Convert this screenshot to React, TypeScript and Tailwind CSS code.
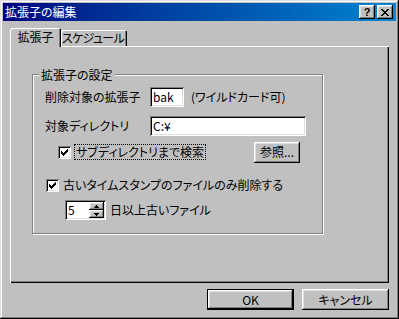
const raised =
  'shadow-[inset_-1px_-1px_#000,inset_1px_1px_#fff,inset_-2px_-2px_#808080,inset_2px_2px_#dfdfdf]'
const sunken =
  'shadow-[inset_1px_1px_#808080,inset_-1px_-1px_#fff,inset_2px_2px_#000,inset_-2px_-2px_#dfdfdf]'

function Check() {
  return (
    <div className={`grid h-[13px] w-[13px] flex-none place-items-center bg-white ${sunken}`}>
      <svg width="7" height="7" viewBox="0 0 7 7" shapeRendering="crispEdges">
        <path d="M6 0h1v1h-1zM5 1h2v1h-2zM0 2h1v1h-1zM4 2h3v1h-3zM0 3h2v1h-2zM3 3h3v1h-3zM0 4h5v1h-5zM1 5h3v1h-3zM2 6h1v1h-1z" fill="#000" />
      </svg>
    </div>
  )
}

function Arrow({ up }: { up?: boolean }) {
  return (
    <div className={`grid h-[8px] w-[15px] place-items-center bg-[#c0c0c0] ${raised}`}>
      <svg width="5" height="3" viewBox="0 0 5 3" shapeRendering="crispEdges">
        {up ? (
          <path d="M2 0h1v1h-1zM1 1h3v1h-3zM0 2h5v1h-5z" fill="#000" />
        ) : (
          <path d="M0 0h5v1h-5zM1 1h3v1h-3zM2 2h1v1h-1z" fill="#000" />
        )}
      </svg>
    </div>
  )
}

export default function App() {
  return (
    <div className="flex h-[319px] w-[399px] flex-col bg-[#c0c0c0] p-[3px] text-[12px] leading-[14px] text-black [font-family:'Noto_Sans_CJK_JP','Liberation_Sans',sans-serif] [font-feature-settings:'palt'] shadow-[inset_-1px_-1px_#000,inset_1px_1px_#dfdfdf,inset_-2px_-2px_#808080,inset_2px_2px_#fff]">
      {/* title bar */}
      <div className="flex h-[18px] flex-none items-center bg-linear-to-r from-[#000080] to-[#1084d0] pl-[2px] pr-[3px] text-white">
        <div className="flex-1">拡張子の編集</div>
        <div className="flex gap-[2px]">
          <div className={`grid h-[14px] w-[16px] place-items-center bg-[#c0c0c0] text-[11px] font-bold leading-none text-black [font-family:'Liberation_Sans',sans-serif] ${raised}`}>
            ?
          </div>
          <div className={`grid h-[14px] w-[16px] place-items-center bg-[#c0c0c0] ${raised}`}>
            <svg width="8" height="7" viewBox="0 0 8 7" shapeRendering="crispEdges">
              <path d="M0 0h2v1h-2zM6 0h2v1h-2zM1 1h2v1h-2zM5 1h2v1h-2zM2 2h4v1h-4zM3 3h2v1h-2zM2 4h4v1h-4zM1 5h2v1h-2zM5 5h2v1h-2zM0 6h2v1h-2zM6 6h2v1h-2z" fill="#000" />
            </svg>
          </div>
        </div>
      </div>

      <div className="flex flex-1 flex-col px-[7px] pt-[7px]">
        {/* tabs */}
        <div className="flex h-[18px] items-end">
          <div className="relative z-10 mb-[-1px] flex h-[19px] w-[51px] items-center justify-center whitespace-nowrap rounded-t-[2px] bg-[#c0c0c0] pb-[1px] shadow-[inset_1px_1px_#fff,inset_-1px_0_#000,inset_-2px_0_#808080]">
            拡張子
          </div>
          <div className="flex h-[16px] w-[66px] items-center justify-center whitespace-nowrap rounded-t-[2px] bg-[#c0c0c0] pr-[2px] tracking-[-0.6px] shadow-[inset_1px_1px_#fff,inset_-1px_0_#000,inset_-2px_0_#808080]">
            スケジュール
          </div>
        </div>

        {/* panel */}
        <div className="h-[237px] bg-[#c0c0c0] pl-[22px] pt-[28px] shadow-[inset_1px_1px_#fff,inset_-1px_-1px_#000,inset_-2px_-2px_#808080]">
          <div className="relative h-[160px] w-[291px] border border-[#808080] pl-[12px] pt-[12px] shadow-[inset_1px_1px_#fff,1px_1px_#fff]">
            <div className="absolute left-[6px] top-[-8px] bg-[#c0c0c0] px-[2px] leading-[16px]">拡張子の設定</div>

            <div className="flex h-[20px] items-center">
              <div className="w-[105px]">削除対象の拡張子</div>
              <div className={`flex h-[20px] w-[34px] items-center bg-white pl-[3px] ${sunken}`}>bak</div>
              <div className="ml-[7px]">(ワイルドカード可)</div>
            </div>

            <div className="mt-[9px] flex h-[20px] items-center">
              <div className="w-[105px]">対象ディレクトリ</div>
              <div className={`flex h-[20px] w-[156px] items-center bg-white pl-[3px] ${sunken}`}>C:¥</div>
            </div>

            <div className="mt-[5px] flex h-[22px] items-center">
              <div className="flex w-[209px] items-center pl-[13px]">
                <Check />
                <div className="ml-[3px] border border-dotted border-black px-[1px] leading-[14px]">サブディレクトリまで検索</div>
              </div>
              <div className={`flex h-[21px] w-[46px] items-center justify-center bg-[#c0c0c0] ${raised}`}>参照...</div>
            </div>

            <div className="mt-[12px] flex h-[20px] items-center pl-[1px]">
              <Check />
              <div className="ml-[4px]">古いタイムスタンプのファイルのみ削除する</div>
            </div>

            <div className="mt-[5px] flex h-[20px] items-center pl-[20px]">
              <div className={`flex h-[20px] w-[41px] items-center bg-white p-[2px] ${sunken}`}>
                <div className="flex-1 pl-[1px]">5</div>
                <div className="flex flex-col">
                  <Arrow up />
                  <Arrow />
                </div>
              </div>
              <div className="ml-[4px]">日以上古いファイル</div>
            </div>
          </div>
        </div>

        {/* buttons */}
        <div className="mt-[6px] flex justify-end gap-[8px]">
          <div className={`flex h-[21px] w-[87px] items-center justify-center border border-black bg-[#c0c0c0] ${raised}`}>OK</div>
          <div className={`flex h-[21px] w-[87px] items-center justify-center bg-[#c0c0c0] ${raised}`}>キャンセル</div>
        </div>
      </div>
    </div>
  )
}
